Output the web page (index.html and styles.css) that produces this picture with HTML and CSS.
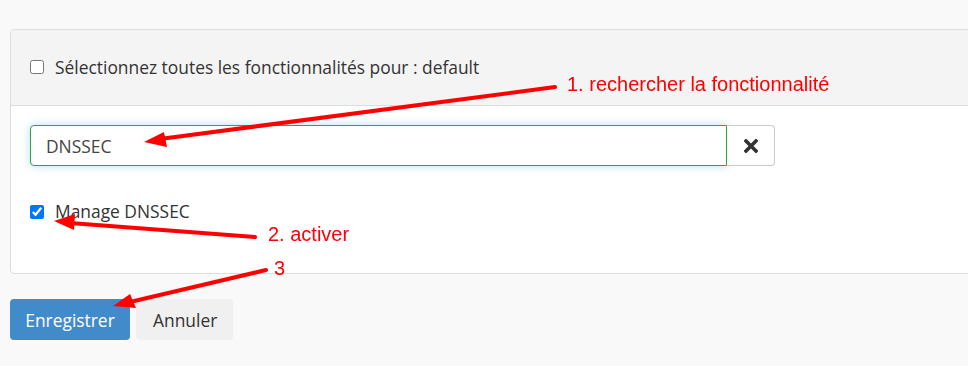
FILE: index.html
```html
<!doctype html>
<html lang="fr">
<head>
  <meta charset="utf-8">
  <title>Fonctionnalités</title>
  <link rel="stylesheet" href="styles.css">
</head>
<body>
<div class="page">
  <div class="panel">
    <div class="panel__heading">
      <label class="check">
        <input type="checkbox">
        <span>Sélectionnez toutes les fonctionnalités pour : default</span>
      </label>
    </div>
    <div class="panel__body">
      <div class="search">
        <input class="search__input" type="text" value="DNSSEC" autofocus>
        <button type="button" class="search__clear">
          <svg width="14" height="14" viewBox="0 0 14 14">
            <path d="M2 2 L12 12 M12 2 L2 12" stroke="#333" stroke-width="3.6" stroke-linecap="square"/>
          </svg>
        </button>
      </div>
      <label class="check check--feature">
        <input type="checkbox" checked>
        <span>Manage DNSSEC</span>
      </label>
    </div>
  </div>

  <div class="actions">
    <button type="button" class="button button--primary">Enregistrer</button>
    <button type="button" class="button">Annuler</button>
  </div>
</div>

<!-- annotations drawn on top of the screenshot -->
<svg class="notes" width="968" height="366" viewBox="0 0 968 366">
  <g stroke="#ff0000" stroke-width="4" stroke-linecap="round" fill="none">
    <line x1="555" y1="87" x2="160" y2="139"/>
    <line x1="255" y1="237" x2="70" y2="223"/>
    <line x1="266" y1="270" x2="130" y2="302"/>
  </g>
  <g fill="#ff0000">
    <polygon points="144,142 164,132 167,147"/>
    <polygon points="54,221 75,214 74,230"/>
    <polygon points="113,306 130,294 136,308"/>
  </g>
  <g class="notes__text">
    <text x="567" y="91">1. rechercher la fonctionnalité</text>
    <text x="268" y="241">2. activer</text>
    <text x="274" y="275">3</text>
  </g>
</svg>
</body>
</html>
```

FILE: styles.css
```css
body {
  margin: 0;
  overflow: hidden;
  background-color: #f9f9f9;
  font-family: "Open Sans", "Helvetica Neue", Arial, sans-serif;
  font-size: 17.4px;
  color: #333;
  height: 366px;
}

.page {
  padding: 29px 0 0 10px;
}

.panel {
  width: 1000px;
  background-color: #fff;
  border: 1px solid #ddd;
  border-radius: 4px;
}

.panel__heading {
  height: 76px;
  box-sizing: border-box;
  display: flex;
  align-items: center;
  padding: 0 19px 2px;
  background-color: #f4f4f4;
  border-bottom: 1px solid #ddd;
  border-radius: 4px 4px 0 0;
}

.panel__body {
  padding: 19px 19px 0;
  height: 148px;
}

.check {
  display: flex;
  align-items: center;
  gap: 11px;
  line-height: 22px;
}

.check input {
  width: 14px;
  height: 14px;
  margin: 0;
  accent-color: #0075ff;
}

.check--feature {
  margin-top: 34px;
}

.check--feature input {
  margin-top: 2px;
}

.search {
  display: flex;
  width: 745px;
}

.search__input {
  flex: 1;
  height: 41px;
  box-sizing: border-box;
  padding: 0 15px;
  font-family: inherit;
  font-size: 17.4px;
  color: #444;
  caret-color: #333;
  border: 1px solid #28a745;
  border-radius: 4px 0 0 4px;
  box-shadow: 0 0 8px rgba(102, 175, 233, 0.45);
  outline: none;
}

.search__clear {
  width: 48px;
  height: 41px;
  display: flex;
  align-items: center;
  justify-content: center;
  background: #fff;
  border: 1px solid #ccc;
  border-left: none;
  border-radius: 0 4px 4px 0;
  padding: 0;
}

.actions {
  display: flex;
  gap: 6px;
  margin-top: 25px;
}

.button {
  height: 41px;
  padding: 0 16px 0 17px;
  font-family: inherit;
  font-size: 17.4px;
  color: #333;
  background-color: #f0f0f0;
  border: none;
  border-radius: 4px;
}

.button--primary {
  width: 120px;
  color: #fff;
  background-color: #428bca;
  padding: 0;
}

.notes {
  position: absolute;
  left: 0;
  top: 0;
  pointer-events: none;
}

.notes__text {
  font-family: "Liberation Sans", Arial, sans-serif;
  font-size: 20px;
  fill: #ff0000;
}
```
